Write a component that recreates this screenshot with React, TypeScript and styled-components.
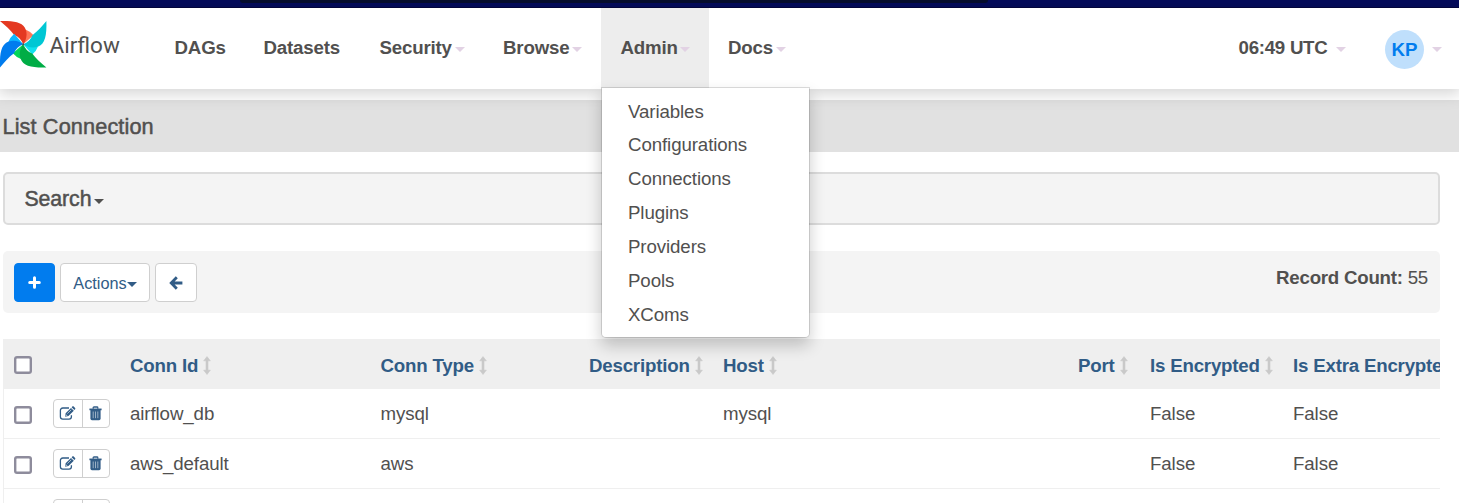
import React from 'react';
import styled, { createGlobalStyle } from 'styled-components';

const Global = createGlobalStyle`
  * { box-sizing: border-box; }
  html, body { margin: 0; padding: 0; overflow: hidden; background: #fff; }
  body { font-family: "Liberation Sans", Arial, sans-serif; font-size: 18.7px; color: #51504f; }
`;

const Page = styled.div`
  width: 1459px;
  height: 503px;
  overflow: hidden;
  display: flex;
  flex-direction: column;
`;
const TopBar = styled.div`
  height: 8px;
  flex: none;
  background: #040b5c;
  border-bottom: 1px solid #03053f;
  padding-left: 240px;
`;
const TopStrip = styled.div`
  width: 748px;
  height: 3px;
  background: #060d2e;
  border-radius: 0 0 3px 3px;
`;
const Header = styled.header`
  position: relative;
  z-index: 2;
  flex: none;
  height: 80.5px;
  display: flex;
  background: #fff;
  box-shadow: 0 3px 15px 2px rgba(0, 0, 0, 0.17);
`;
const Brand = styled.div`
  width: 155px;
  display: flex;
  padding-top: 13px;
`;
const BrandName = styled.span`
  font-family: Roboto, sans-serif;
  font-size: 22.5px;
  line-height: 28px;
  margin: 9.5px 0 0 2.5px;
  color: #51504f;
`;
const NavItem = styled.div<{ $w: number; $active?: boolean }>`
  position: relative;
  width: ${p => p.$w}px;
  padding: 0 0 1px 19.5px;
  display: flex;
  align-items: center;
  font-weight: 700;
  letter-spacing: -0.18px;
  white-space: nowrap;
  background: ${p => (p.$active ? '#ededed' : 'transparent')};
`;
const Caret = styled.i<{ $c?: string; $ml?: number }>`
  flex: none;
  display: inline-block;
  width: 0;
  height: 0;
  margin-left: ${p => p.$ml ?? 2.7}px;
  margin-top: 3px;
  border: 5px solid transparent;
  border-top-color: ${p => p.$c ?? '#e2d2e4'};
  border-bottom: 0;
`;
const Right = styled.div`
  margin-left: auto;
  display: flex;
  align-items: center;
  font-weight: 700;
  padding-right: 17px;
`;
const Clock = styled.span`
  padding-bottom: 1px;
  letter-spacing: -0.27px;
`;
const Avatar = styled.div`
  width: 39px;
  height: 39px;
  margin: 2px 0 0 39px;
  padding-top: 1px;
  border-radius: 50%;
  background: #bfdffc;
  color: #017cee;
  display: flex;
  align-items: center;
  justify-content: center;
`;
const Menu = styled.div`
  position: absolute;
  top: 79px;
  left: 0;
  width: 209px;
  height: 251px;
  padding: 6.5px 0 0 26px;
  background: #fff;
  border: 1px solid rgba(0, 0, 0, 0.13);
  background-clip: padding-box;
  border-radius: 0 0 5px 5px;
  box-shadow: 0 8px 16px rgba(0, 0, 0, 0.2);
  font-weight: 400;
  letter-spacing: -0.1px;
`;
const MenuItem = styled.div`
  height: 33.85px;
  line-height: 34px;
`;
const TitleBar = styled.div`
  margin-top: 11px;
  height: 52.5px;
  flex: none;
  background: #e1e1e1;
  padding: 1px 0 0 2.5px;
  font-size: 21.7px;
  line-height: 52px;
  letter-spacing: 0.12px;
  -webkit-text-stroke: 0.5px #51504f;
`;
const Content = styled.main`
  width: 1437.5px;
  margin: 20px 0 0 2.5px;
  display: flex;
  flex-direction: column;
`;
const SearchPanel = styled.section`
  height: 53px;
  border: 2px solid #dcdcdc;
  border-radius: 5px;
  background: #f4f4f4;
  padding: 2px 0 0 20px;
  display: flex;
  align-items: center;
  font-size: 21.3px;
`;
const SearchLabel = styled.span`
  letter-spacing: -0.1px;
  -webkit-text-stroke: 0.5px #51504f;
`;
const Toolbar = styled.section`
  height: 62px;
  margin-top: 26px;
  border-radius: 5px;
  background: #f4f4f4;
  padding: 0 12px 0 11.5px;
  display: flex;
  align-items: center;
  gap: 5px;
`;
const Button = styled.button<{ $w: number; $primary?: boolean }>`
  width: ${p => p.$w}px;
  height: 39px;
  padding: 1px 0 0;
  border: 1px solid ${p => (p.$primary ? '#017cee' : '#cfcfcf')};
  border-radius: 4px;
  background: ${p => (p.$primary ? '#017cee' : '#fff')};
  color: ${p => (p.$primary ? '#fff' : '#315c86')};
  font: 16.3px/20px "Liberation Sans", Arial, sans-serif;
  display: flex;
  align-items: center;
  justify-content: center;
`;
const RecordCount = styled.div`
  margin-left: auto;
  padding-bottom: 9px;
  letter-spacing: -0.24px;
`;
const Table = styled.div`
  margin-top: 26px;
  overflow: hidden;
  border-left: 1px solid #efefef;
`;
const Row = styled.div<{ $head?: boolean }>`
  display: grid;
  grid-template-columns: 39px 77.5px 250.5px 208.5px 134px 355px 72px 143px 200px;
  align-items: center;
  height: 50px;
  padding: 2px 0 0 10px;
  white-space: nowrap;
  background: ${p => (p.$head ? '#efefef' : '#fff')};
  border-bottom: 1px solid #efefef;
  font-weight: ${p => (p.$head ? 700 : 400)};
  letter-spacing: ${p => (p.$head ? -0.2 : -0.1)}px;
  color: ${p => (p.$head ? '#315c86' : '#51504f')};
`;
const HeadCell = styled.div`
  display: flex;
  align-items: center;
  padding-top: 2px;
`;
const Cell = styled.span`
  padding-bottom: 2px;
`;
const Checkbox = styled.div`
  width: 18px;
  height: 18px;
  box-shadow: inset 0 0 0 2.4px #8e8c9c;
  border-radius: 3px;
  background: #fff;
`;
const ButtonGroup = styled.div`
  width: 57px;
  height: 29px;
  margin-top: -3px;
  border: 1px solid #cfcfcf;
  border-radius: 4px;
  display: flex;
`;
const GroupButton = styled.div<{ $first?: boolean }>`
  width: ${p => (p.$first ? 29.5 : 25.5)}px;
  display: flex;
  align-items: center;
  justify-content: center;
  border-right: ${p => (p.$first ? '1px solid #cfcfcf' : '0')};
`;
const SortSvg = styled.svg`
  margin: -1px 0 0 5px;
`;

const petals: [number, string, string][] = [
  [0, '#e43921', '#ff7557'],
  [90, '#00c7d4', '#11e1ee'],
  [180, '#00ad46', '#04d659'],
  [270, '#017cee', '#0cb6ff'],
];
const Logo = () => (
  <svg width="47" height="47" viewBox="-23.2 -23.2 47 47">
    {petals.map(([a, main, light]) => (
      <g key={a} transform={`rotate(${a})`}>
        <path fill={light} d="M2.2 -14.8Q7 -13 10.4 -9L0 0Z" />
        <path fill={main} d="M-23.2 -23.2C-9 -23.6 0 -22 2.6 -14.5C4.6 -8.5 2.4 -3.5 0 0C-2 -4.5 -4.5 -7.5 -9 -9.2C-13 -14.5 -17.5 -18.5 -23.2 -23.2Z" />
      </g>
    ))}
    <circle r="1" fill="#51504f" />
  </svg>
);

const EditIcon = () => (
  <svg width="17" height="15" viewBox="0 0 17 15" fill="none" stroke="#315c86">
    <path strokeWidth="1.3" d="M10 2H3.8C2.4 2 1.4 3 1.4 4.4V10.8C1.4 12.2 2.4 13.2 3.8 13.2H10C11.4 13.2 12.4 12.2 12.4 10.8V9.3" />
    <path fill="#315c86" stroke="none" d="M6.6 7.3L12 1.9L14.8 4.7L9.4 10.1L6.2 10.7ZM12.6 1.3L13.3 .6C13.7 .2 14.3 .2 14.7 .6L16.1 2C16.5 2.4 16.5 2.9 16.1 3.3L15.4 4.1Z" />
    <path stroke="#fff" strokeWidth=".6" d="M8.4 7.6L12.2 3.8M7.2 8.6V9.7H8.3" />
  </svg>
);
const TrashIcon = () => (
  <svg width="13" height="15" viewBox="0 0 13 15" fill="none" stroke="#315c86">
    <path strokeWidth="1.3" d="M4.2 2.7V1.8Q4.2 1 5 1H8Q8.8 1 8.8 1.8V2.7" />
    <path strokeWidth="1.7" d="M.4 3.4H12.6" />
    <path fill="#315c86" stroke="none" d="M1.4 4H11.6V12.5Q11.6 14.2 10 14.2H3Q1.4 14.2 1.4 12.5Z" />
    <path stroke="#fff" strokeWidth=".7" opacity=".75" d="M4.2 5.5V12.2M6.5 5.5V12.2M8.8 5.5V12.2" />
  </svg>
);
const SortIcon = () => (
  <SortSvg width="8" height="19" viewBox="0 0 8 19">
    <path fill="#c9c9c9" stroke="#c9c9c9" strokeWidth=".6" strokeLinejoin="round" d="M4 .6L7.3 4.8H5V14.2H7.3L4 18.4L.7 14.2H3V4.8H.7Z" />
  </SortSvg>
);
const PlusIcon = () => (
  <svg width="13" height="13" viewBox="0 0 13 13">
    <path stroke="#fff" strokeWidth="3" strokeLinecap="round" d="M6.5 1.7V11.3M1.7 6.5H11.3" />
  </svg>
);
const BackIcon = () => (
  <svg width="14" height="14" viewBox="0 0 14 14" fill="none" stroke="#315c86">
    <path strokeWidth="2.8" d="M7.8 1.2L2.2 7L7.8 12.8M2.5 7H13.4" />
  </svg>
);

const menu = ['Variables', 'Configurations', 'Connections', 'Plugins', 'Providers', 'Pools', 'XComs'];
const heads = ['Conn Id', 'Conn Type', 'Description', 'Host', 'Port', 'Is Encrypted', 'Is Extra Encrypted'];
const rows = [
  ['airflow_db', 'mysql', '', 'mysql', '', 'False', 'False'],
  ['aws_default', 'aws', '', '', '', 'False', 'False'],
  ['', '', '', '', '', '', ''],
];

export default function App() {
  return (
    <Page>
      <Global />
      <TopBar><TopStrip /></TopBar>
      <Header>
        <Brand><Logo /><BrandName>Airflow</BrandName></Brand>
        <NavItem $w={89}>DAGs</NavItem>
        <NavItem $w={116}>Datasets</NavItem>
        <NavItem $w={123.5}>Security<Caret /></NavItem>
        <NavItem $w={117.5}>Browse<Caret /></NavItem>
        <NavItem $w={107.5} $active>
          Admin<Caret />
          <Menu>{menu.map(m => <MenuItem key={m}>{m}</MenuItem>)}</Menu>
        </NavItem>
        <NavItem $w={97}>Docs<Caret /></NavItem>
        <Right>
          <Clock>06:49 UTC</Clock>
          <Caret $ml={8.5} />
          <Avatar>KP</Avatar>
          <Caret $ml={8} />
        </Right>
      </Header>
      <TitleBar>List Connection</TitleBar>
      <Content>
        <SearchPanel><SearchLabel>Search</SearchLabel><Caret $c="#51504f" /></SearchPanel>
        <Toolbar>
          <Button $w={41} $primary><PlusIcon /></Button>
          <Button $w={90}>Actions<Caret $c="#315c86" $ml={0} /></Button>
          <Button $w={41.5}><BackIcon /></Button>
          <RecordCount><b>Record Count:</b> 55</RecordCount>
        </Toolbar>
        <Table>
          <Row $head>
            <Checkbox /><span />
            {heads.map(h => <HeadCell key={h}>{h}<SortIcon /></HeadCell>)}
          </Row>
          {rows.map((r, i) => (
            <Row key={i}>
              <Checkbox />
              <ButtonGroup>
                <GroupButton $first><EditIcon /></GroupButton>
                <GroupButton><TrashIcon /></GroupButton>
              </ButtonGroup>
              {r.map((c, j) => <Cell key={j}>{c}</Cell>)}
            </Row>
          ))}
        </Table>
      </Content>
    </Page>
  );
}
